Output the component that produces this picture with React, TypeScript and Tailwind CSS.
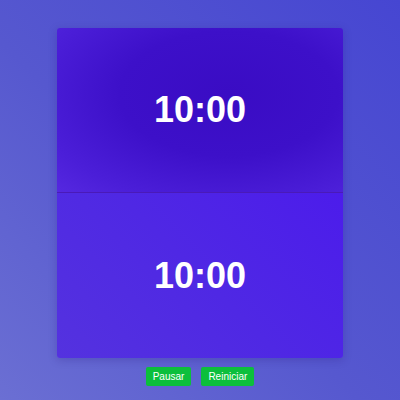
import React from 'react';

const Half: React.FC<{ className: string; time: string }> = ({ className, time }) => (
  <div className={`flex h-[165px] items-center justify-center ${className}`}>
    <span className="text-[36px] font-bold leading-none text-white">{time}</span>
  </div>
);

export default function App() {
  return (
    <div
      className="flex h-[400px] w-[400px] flex-col items-center bg-[linear-gradient(45deg,#6b6fd3_0%,#5658cf_45%,#4646d2_100%)] pt-[28px]"
      style={{ fontFamily: '"Liberation Sans", Arial, sans-serif' }}
    >
      <div className="flex w-[286px] flex-col overflow-hidden rounded-[3px] shadow-[0_2px_8px_rgba(40,20,120,0.25)]">
        <Half
          time="10:00"
          className="border-b border-[#4a1ab8] bg-[radial-gradient(ellipse_at_60%_40%,#3a0cc4_0%,#3d10c9_45%,#4b1ed8_80%,#5528e0_100%)]"
        />
        <Half
          time="10:00"
          className="h-[164px] bg-[linear-gradient(45deg,#5432df_0%,#4f28e4_50%,#4c1ceb_100%)]"
        />
      </div>
      <div className="mt-[9px] flex gap-[10px]">
        <button className="h-[19px] rounded-[2px] bg-[#0cbf3c] px-[7px] text-[10px] leading-none text-white">Pausar</button>
        <button className="h-[19px] rounded-[2px] bg-[#0cbf3c] px-[7px] text-[10px] leading-none text-white">Reiniciar</button>
      </div>
    </div>
  );
}
